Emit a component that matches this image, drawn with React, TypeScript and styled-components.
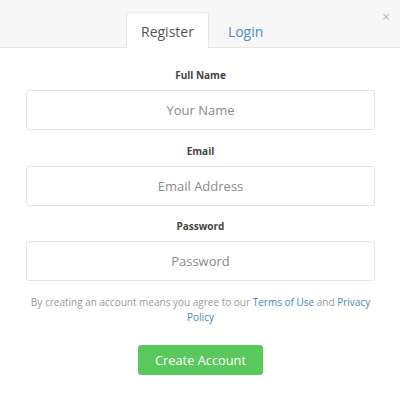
import styled, { createGlobalStyle } from "styled-components";

const GlobalStyle = createGlobalStyle`
  html, body {
    margin: 0;
    padding: 0;
    background: #ffffff;
    font-family: "Open Sans", "Liberation Sans", sans-serif;
  }
  * { box-sizing: border-box; }
`;

const Modal = styled.div`
  width: 400px;
  height: 394px;
  background: #fff;
  position: relative;
`;

const Header = styled.div`
  height: 48px;
  background: #f7f7f7;
  border-bottom: 1px solid #e6e6e6;
  display: flex;
  align-items: flex-end;
  gap: 4px;
  padding-left: 126px;
`;

const Tab = styled.div<{ $active?: boolean }>`
  height: 36px;
  margin-bottom: -1px;
  padding: 1px 14px 0;
  display: flex;
  align-items: center;
  font-size: 14px;
  color: ${(p) => (p.$active ? "#555" : "#4a8dc4")};
  background: ${(p) => (p.$active ? "#fff" : "transparent")};
  border: 1px solid ${(p) => (p.$active ? "#e6e6e6" : "transparent")};
  border-bottom: none;
  border-radius: 3px 3px 0 0;
`;

const Close = styled.span`
  position: absolute;
  top: 7px;
  right: 10px;
  font-size: 14px;
  color: #b5b5b5;
`;

const Form = styled.div`
  padding: 20px 25px 0 26px;
  display: flex;
  flex-direction: column;
`;

const Field = styled.div`
  display: flex;
  flex-direction: column;
  align-items: center;
  margin-bottom: 13.5px;
`;

const Label = styled.label`
  font-size: 10px;
  font-weight: 700;
  color: #444;
  line-height: 14px;
  margin-bottom: 8px;
`;

const Input = styled.input`
  width: 100%;
  height: 40px;
  border: 1px solid #e4e4e4;
  border-radius: 3px;
  text-align: center;
  font-family: inherit;
  font-size: 13px;
  color: #555;
  outline: none;
  &::placeholder {
    color: #8a8a8a;
  }
`;

const Terms = styled.p`
  margin: 0 -3px;
  text-align: center;
  font-size: 10px;
  line-height: 15px;
  color: #999;
`;

const Link = styled.a`
  color: #4a83b6;
  text-decoration: none;
`;

const ButtonRow = styled.div`
  display: flex;
  justify-content: center;
  margin-top: 20px;
`;

const Button = styled.button`
  width: 125px;
  height: 30px;
  background: #5ac85c;
  border: none;
  border-radius: 3px;
  color: #fff;
  font-family: inherit;
  font-size: 12.8px;
`;

export default function App() {
  return (
    <>
      <GlobalStyle />
      <Modal>
        <Header>
          <Tab $active>Register</Tab>
          <Tab>Login</Tab>
        </Header>
        <Close>×</Close>
        <Form>
          <Field>
            <Label>Full Name</Label>
            <Input placeholder="Your Name" />
          </Field>
          <Field>
            <Label>Email</Label>
            <Input placeholder="Email Address" />
          </Field>
          <Field>
            <Label>Password</Label>
            <Input type="password" placeholder="Password" />
          </Field>
          <Terms>
            By creating an account means you agree to our <Link href="#">Terms of Use</Link> and{" "}
            <Link href="#">Privacy Policy</Link>
          </Terms>
          <ButtonRow>
            <Button>Create Account</Button>
          </ButtonRow>
        </Form>
      </Modal>
    </>
  );
}
